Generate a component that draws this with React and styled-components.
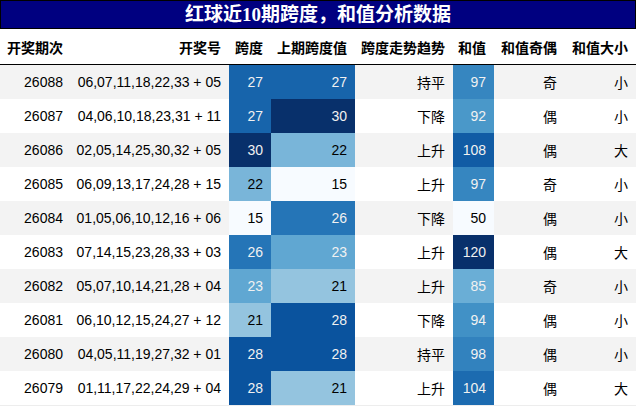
import React from "react";
import styled, { createGlobalStyle } from "styled-components";

const GlobalStyle = createGlobalStyle`
  html, body { margin: 0; padding: 0; background: #ffffff; }
  body { font-family: "Liberation Sans", "Noto Sans CJK SC", sans-serif; }
`;

const BLUES = [
  [0.96862745, 0.98431373, 1.0],
  [0.87058824, 0.92156863, 0.96862745],
  [0.77647059, 0.85882353, 0.9372549],
  [0.61960784, 0.79215686, 0.88235294],
  [0.41960784, 0.68235294, 0.83921569],
  [0.25882353, 0.57254902, 0.77647059],
  [0.12941176, 0.44313725, 0.70980392],
  [0.03137255, 0.31764706, 0.61176471],
  [0.03137255, 0.18823529, 0.41960784],
];

function blues(v) {
  const idx = Math.min(255, Math.max(0, Math.floor(v * 256)));
  const x = idx / 255;
  const seg = Math.min(7, Math.floor(x * 8));
  const t = (x - seg / 8) * 8;
  const a = BLUES[seg];
  const b = BLUES[seg + 1];
  return [0, 1, 2].map((i) => a[i] + (b[i] - a[i]) * t);
}

function lum(rgb) {
  const c = rgb.map((x) => (x <= 0.03928 ? x / 12.92 : Math.pow((x + 0.055) / 1.055, 2.4)));
  return 0.2126 * c[0] + 0.7152 * c[1] + 0.0722 * c[2];
}

function gradient(value, min, max) {
  const rgb = blues((value - min) / (max - min));
  const hex = "#" + rgb.map((x) => Math.round(x * 255).toString(16).padStart(2, "0")).join("");
  return { bg: hex, fg: lum(rgb) < 0.408 ? "#f1f1f1" : "#000000" };
}

const rows = [
  ["26088", "06,07,11,18,22,33 + 05", 27, 27, "持平", 97, "奇", "小"],
  ["26087", "04,06,10,18,23,31 + 11", 27, 30, "下降", 92, "偶", "小"],
  ["26086", "02,05,14,25,30,32 + 05", 30, 22, "上升", 108, "偶", "大"],
  ["26085", "06,09,13,17,24,28 + 15", 22, 15, "上升", 97, "奇", "小"],
  ["26084", "01,05,06,10,12,16 + 06", 15, 26, "下降", 50, "偶", "小"],
  ["26083", "07,14,15,23,28,33 + 03", 26, 23, "上升", 120, "偶", "大"],
  ["26082", "05,07,10,14,21,28 + 04", 23, 21, "上升", 85, "奇", "小"],
  ["26081", "06,10,12,15,24,27 + 12", 21, 28, "下降", 94, "偶", "小"],
  ["26080", "04,05,11,19,27,32 + 01", 28, 28, "持平", 98, "偶", "小"],
  ["26079", "01,11,17,22,24,29 + 04", 28, 21, "上升", 104, "偶", "大"],
];

const headers = ["开奖期次", "开奖号", "跨度", "上期跨度值", "跨度走势趋势", "和值", "和值奇偶", "和值大小"];

const range = (i) => {
  const vals = rows.map((r) => r[i]);
  return [Math.min(...vals), Math.max(...vals)];
};
const ranges = { 2: range(2), 3: range(3), 5: range(5) };

const COLS = "71px 158px 42px 84px 98px 41px 71px 71px";

const Page = styled.div`
  width: 636px;
  display: flex;
  flex-direction: column;
`;

const TitleBar = styled.div`
  box-sizing: border-box;
  height: 29px;
  background: #000080;
  border: 1px solid #000000;
  color: #ffffff;
  font-family: "Liberation Serif", "Noto Sans CJK SC", serif;
  font-weight: 700;
  font-size: 19px;
  line-height: 27px;
  text-align: center;
`;

const HeaderRow = styled.div`
  display: grid;
  grid-template-columns: ${COLS};
  height: 36px;
  box-sizing: border-box;
  border-bottom: 1px solid #000000;
  background: #ffffff;
`;

const HeaderCell = styled.div`
  display: flex;
  align-items: flex-end;
  justify-content: flex-end;
  padding: 0 8px 6px 0;
  font-weight: 700;
  font-size: 14px;
  line-height: 20px;
  color: #000000;
  white-space: nowrap;
`;

const Body = styled.div`
  display: flex;
  flex-direction: column;
  border-bottom: 1px solid #ededed;
`;

const Row = styled.div`
  display: grid;
  grid-template-columns: ${COLS};
  height: 34px;
  background: ${(p) => (p.$striped ? "#f3f3f3" : "#ffffff")};
`;

const Cell = styled.div`
  display: flex;
  align-items: center;
  justify-content: flex-end;
  padding-right: 8px;
  font-size: 14px;
  color: ${(p) => p.$fg || "#000000"};
  background: ${(p) => p.$bg || "transparent"};
  white-space: nowrap;
`;

export default function App() {
  return (
    <Page>
      <GlobalStyle />
      <TitleBar>红球近10期跨度，和值分析数据</TitleBar>
      <HeaderRow>
        {headers.map((h) => (
          <HeaderCell key={h}>{h}</HeaderCell>
        ))}
      </HeaderRow>
      <Body>
        {rows.map((r, ri) => (
          <Row key={r[0]} $striped={ri % 2 === 0}>
            {r.map((v, ci) => {
              if (ranges[ci]) {
                const g = gradient(v, ranges[ci][0], ranges[ci][1]);
                return (
                  <Cell key={ci} $bg={g.bg} $fg={g.fg}>
                    {v}
                  </Cell>
                );
              }
              return <Cell key={ci}>{v}</Cell>;
            })}
          </Row>
        ))}
      </Body>
    </Page>
  );
}
